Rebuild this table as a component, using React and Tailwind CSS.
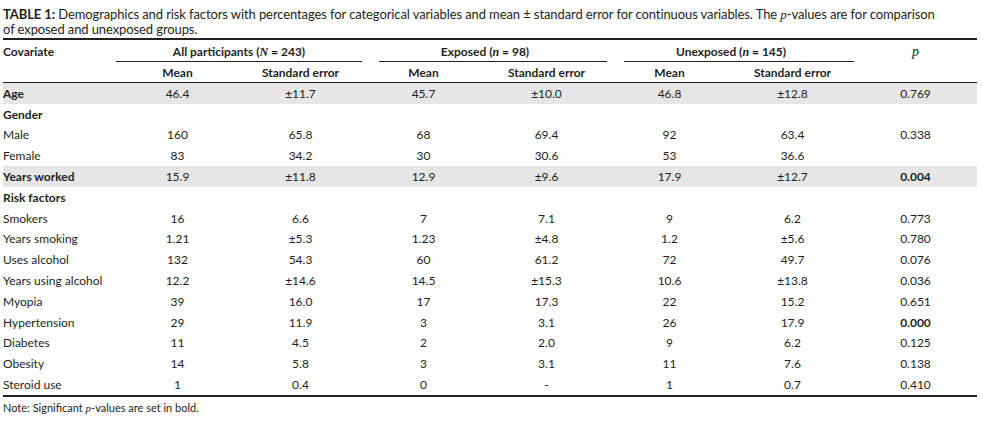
const FONT = { fontFamily: "Lato, 'Open Sans', sans-serif" };

const ROWS = [
  { label: "Age", bold: true, shade: true, v: ["46.4", "±11.7", "45.7", "±10.0", "46.8", "±12.8"], p: "0.769" },
  { label: "Gender", bold: true },
  { label: "Male", v: ["160", "65.8", "68", "69.4", "92", "63.4"], p: "0.338" },
  { label: "Female", v: ["83", "34.2", "30", "30.6", "53", "36.6"], p: "" },
  { label: "Years worked", bold: true, shade: true, v: ["15.9", "±11.8", "12.9", "±9.6", "17.9", "±12.7"], p: "0.004", pBold: true },
  { label: "Risk factors", bold: true },
  { label: "Smokers", v: ["16", "6.6", "7", "7.1", "9", "6.2"], p: "0.773" },
  { label: "Years smoking", v: ["1.21", "±5.3", "1.23", "±4.8", "1.2", "±5.6"], p: "0.780" },
  { label: "Uses alcohol", v: ["132", "54.3", "60", "61.2", "72", "49.7"], p: "0.076" },
  { label: "Years using alcohol", v: ["12.2", "±14.6", "14.5", "±15.3", "10.6", "±13.8"], p: "0.036" },
  { label: "Myopia", v: ["39", "16.0", "17", "17.3", "22", "15.2"], p: "0.651" },
  { label: "Hypertension", v: ["29", "11.9", "3", "3.1", "26", "17.9"], p: "0.000", pBold: true },
  { label: "Diabetes", v: ["11", "4.5", "2", "2.0", "9", "6.2"], p: "0.125" },
  { label: "Obesity", v: ["14", "5.8", "3", "3.1", "11", "7.6"], p: "0.138" },
  { label: "Steroid use", v: ["1", "0.4", "0", "-", "1", "0.7"], p: "0.410" },
];

const GRID = "grid grid-cols-[113px_123px_123px_123px_123px_123px_123px_123px]";

function Ital({ children }) {
  return <span className="italic" style={{ fontFamily: "'Liberation Serif', serif" }}>{children}</span>;
}

function Group({ children, ml, mr }) {
  return (
    <div className="col-span-2 flex flex-col">
      <div className="h-[21px] pt-[2px] flex items-center justify-center font-bold">{children}</div>
      <div className={`border-t border-[#231f20] ${ml} ${mr}`} />
    </div>
  );
}

export default function App() {
  return (
    <div className="bg-white w-[983px] h-[427px] pl-[3px] pt-[7px] text-[#231f20] overflow-hidden" style={FONT}>
      <div className="text-[13px] leading-[15px] tracking-[-0.1px]">
        <div className="whitespace-nowrap">
          <span className="font-bold">TABLE 1:</span> Demographics and risk factors with percentages for categorical variables and mean ± standard error for continuous variables. The <Ital>p</Ital>-values are for comparison
        </div>
        <div>of exposed and unexposed groups.</div>
      </div>

      <div className="w-[974px] mt-[1px] border-t-2 border-[#231f20] text-[12px]">
        <div className={GRID}>
          <div className="h-[21px] pt-[2px] flex items-center font-bold">Covariate</div>
          <Group ml="ml-0" mr="mr-0">All participants (<Ital>N</Ital>&nbsp;= 243)</Group>
          <Group ml="ml-[17px]" mr="mr-[1px]">Exposed (<Ital>n</Ital>&nbsp;= 98)</Group>
          <Group ml="ml-[16px]" mr="mr-0">Unexposed (<Ital>n</Ital>&nbsp;= 145)</Group>
          <div className="h-[21px] pt-[2px] flex items-center justify-center text-[14px]"><Ital>p</Ital></div>
        </div>
        <div className={`${GRID} h-[21px] pt-[1px] items-center font-bold border-b-[1.5px] border-[#231f20]`}>
          <div />
          <div className="text-center">Mean</div>
          <div className="text-center">Standard error</div>
          <div className="text-center">Mean</div>
          <div className="text-center">Standard error</div>
          <div className="text-center">Mean</div>
          <div className="text-center">Standard error</div>
          <div />
        </div>
        <div className="border-b-2 border-[#231f20]">
          {ROWS.map((r) => (
            <div key={r.label} className={`${GRID} h-[20.8px] pt-[1px] items-center ${r.shade ? "bg-[#e6e6e6]" : ""}`}>
              <div className={r.bold ? "font-bold" : ""}>{r.label}</div>
              {(r.v || ["", "", "", "", "", ""]).map((x, i) => (
                <div key={i} className="text-center">{x}</div>
              ))}
              <div className={`text-center ${r.pBold ? "font-bold" : ""}`}>{r.p || ""}</div>
            </div>
          ))}
        </div>
      </div>

      <p className="text-[11px] mt-[3px]">
        Note: Significant <Ital>p</Ital>-values are set in bold.
      </p>
    </div>
  );
}
